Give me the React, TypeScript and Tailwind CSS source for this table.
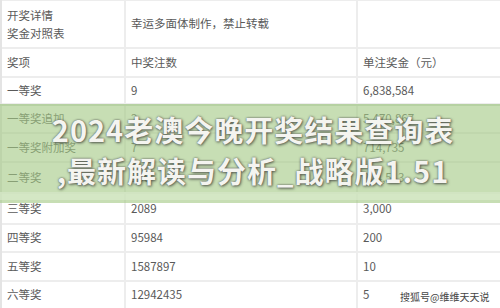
const rows: { h: string; a: string; b: string; c: string }[] = [
  { h: 'h-[29px]', a: '奖项', b: '中奖注数', c: '单注奖金（元）' },
  { h: 'h-[27px]', a: '一等奖', b: '9', c: '6,838,584' },
  { h: 'h-[29px]', a: '一等奖追加', b: '2', c: '5,470,867' },
  { h: 'h-[29px]', a: '一等奖附加奖', b: '7', c: '714,735' },
  { h: 'h-[31px]', a: '二等奖', b: '106', c: '224,513' },
  { h: 'h-[31px]', a: '三等奖', b: '2089', c: '3,000' },
  { h: 'h-[28px]', a: '四等奖', b: '95984', c: '200' },
  { h: 'h-[29px]', a: '五等奖', b: '1587897', c: '10' },
  { h: 'h-[28px]', a: '六等奖', b: '12942435', c: '5' },
];

function Row({ h, a, b, c }: { h: string; a: string; b: string; c: string }) {
  return (
    <div className={`grid grid-cols-[124px_232px_1fr] ${h} border-b-2 border-[#ededed]`}>
      <div className="flex items-center border-r-2 border-[#ededed] pl-[5px]">{a}</div>
      <div className="flex items-center border-r-2 border-[#ededed] pl-[5px]">{b}</div>
      <div className="flex items-center pl-[5px]">{c}</div>
    </div>
  );
}

export default function App() {
  return (
    <div className="relative h-[308px] w-[500px] overflow-hidden bg-white text-[11.5px] text-[#5a5a5a] [font-family:'Noto_Sans_CJK_SC',sans-serif]">
      <div className="border-l-2 border-[#e4e4e4]">
        <div className="grid h-[49px] grid-cols-[124px_232px_1fr] border-b-2 border-t border-[#ededed]">
          <div className="flex flex-col justify-center gap-[4px] border-r-2 border-[#ededed] pl-[5px] leading-[14px]">
            <span>开奖详情</span>
            <span>奖金对照表</span>
          </div>
          <div className="flex items-center border-r-2 border-[#ededed] pl-[5px]">幸运多面体制作，禁止转载</div>
          <div />
        </div>
        {rows.map((r) => (
          <Row key={r.a} {...r} />
        ))}
      </div>

      {/* green banner laid over the table */}
      <div className="absolute left-0 top-[104px] h-[99px] w-full border-t-2 border-[#b6d1a2] bg-[rgba(164,202,134,0.62)]">
        <div className="absolute bottom-[3px] left-0 h-[8px] w-full bg-[rgba(220,236,208,0.6)]" />
      </div>
      <div className="absolute left-0 top-[109px] flex w-full flex-col items-center pl-[6px] text-[29px] font-bold leading-[41px] tracking-[1px] text-[#f4f4f0] [text-shadow:0_0_2px_#555,1px_1px_3px_rgba(0,0,0,0.55)]">
        <span>2024老澳今晚开奖结果查询表</span>
        <span>,最新解读与分析_战略版1.51</span>
      </div>

      <span className="absolute left-[400px] top-[289px] text-[10px] text-[#444]">搜狐号@维维天天说</span>
    </div>
  );
}
